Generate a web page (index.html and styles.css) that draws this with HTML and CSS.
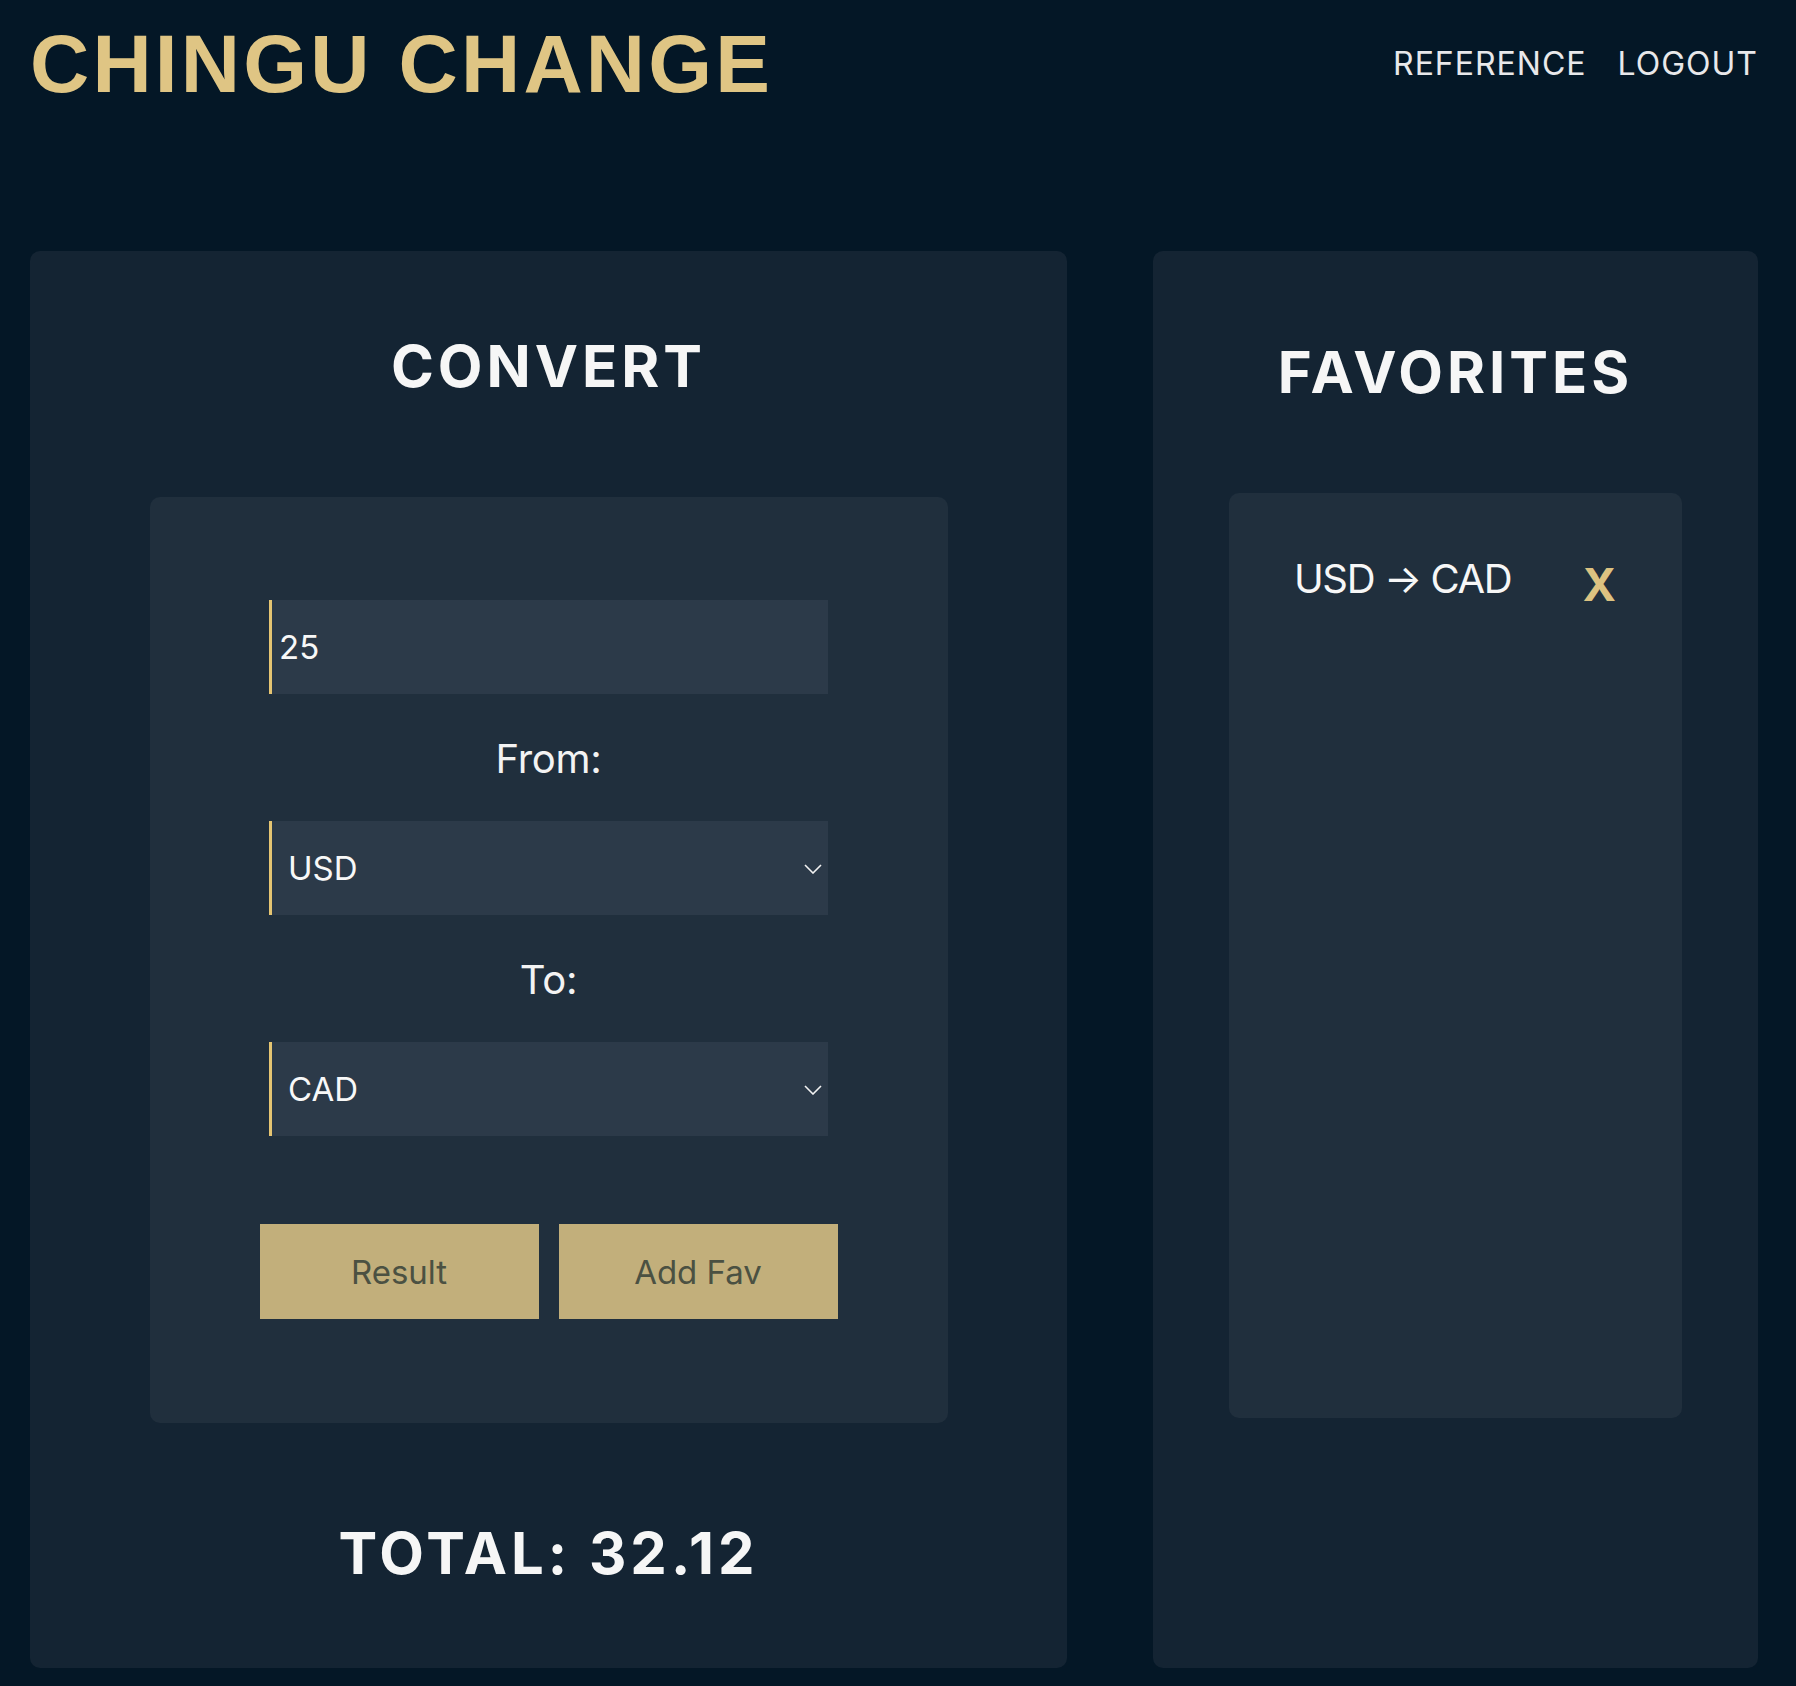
FILE: index.html
```html
<!DOCTYPE html>
<html lang="en">
<head>
<meta charset="utf-8">
<title>Chingu Change</title>
<link rel="stylesheet" href="styles.css">
</head>
<body>
<header class="topbar">
  <h1 class="brand">CHINGU CHANGE</h1>
  <nav class="nav">
    <a class="nav-link" href="#">REFERENCE</a>
    <a class="nav-link" href="#">LOGOUT</a>
  </nav>
</header>
<main class="layout">
  <section class="card card-convert">
    <h2 class="card-title">CONVERT</h2>
    <div class="panel panel-convert">
      <input class="field field-input" type="text" value="25">
      <label class="field-label">From:</label>
      <div class="select-wrap">
        <select class="field field-select">
          <option>USD</option>
        </select>
        <svg class="chevron" width="18" height="10" viewBox="0 0 18 10"><path d="M1 1 L9 9 L17 1" fill="none" stroke="#f2f2f2" stroke-width="1.6"/></svg>
      </div>
      <label class="field-label">To:</label>
      <div class="select-wrap">
        <select class="field field-select">
          <option>CAD</option>
        </select>
        <svg class="chevron" width="18" height="10" viewBox="0 0 18 10"><path d="M1 1 L9 9 L17 1" fill="none" stroke="#f2f2f2" stroke-width="1.6"/></svg>
      </div>
      <div class="actions">
        <button class="btn" type="button">Result</button>
        <button class="btn" type="button">Add Fav</button>
      </div>
    </div>
    <h2 class="card-title total">TOTAL: 32.12</h2>
  </section>
  <section class="card card-favs">
    <h2 class="card-title fav-title">FAVORITES</h2>
    <div class="panel panel-favs">
      <div class="fav-item">
        <span class="fav-pair">USD → CAD</span>
        <span class="fav-remove">X</span>
      </div>
    </div>
  </section>
</main>
</body>
</html>
```
FILE: styles.css
```css
* { box-sizing: border-box; }

html, body {
  margin: 0;
  padding: 0;
  background: #041726;
  color: #f5f5f5;
  font-family: Inter, "Noto Sans", sans-serif;
}

.topbar {
  display: flex;
  justify-content: space-between;
  align-items: center;
  padding: 17px 38px 0 30px;
}

.brand {
  margin: 0;
  font-family: "Liberation Sans", Arial, sans-serif;
  font-weight: 700;
  font-size: 82px;
  line-height: 94px;
  letter-spacing: 3.2px;
  color: #dfc584;
}

.nav {
  display: flex;
  gap: 31px;
  margin-top: -2px;
}

.nav-link {
  color: #e8e8ea;
  text-decoration: none;
  font-size: 32px;
  letter-spacing: 1px;
}

.layout {
  display: flex;
  justify-content: space-between;
  align-items: stretch;
  padding: 0 38px 0 30px;
  margin-top: 140px;
}

.card {
  background: #142433;
  border-radius: 10px;
  display: flex;
  flex-direction: column;
  align-items: center;
}

.card-convert {
  width: 1037px;
  padding: 80px 0 80px;
}

.card-favs {
  width: 605px;
  padding-top: 86px;
}

.card-title {
  margin: 0;
  font-size: 58px;
  line-height: 70px;
  font-weight: 700;
  letter-spacing: 4px;
  color: #f6f6f6;
}

.panel {
  background: #202f3d;
  border-radius: 10px;
}

.panel-convert {
  width: 798px;
  margin-top: 96px;
  padding: 103px 0 104px;
  display: flex;
  flex-direction: column;
  align-items: center;
}

.field {
  display: block;
  width: 559px;
  height: 94px;
  border: none;
  border-left: 3px solid #e5c572;
  background: #2c3a49;
  color: #f8f8f8;
  font-family: Inter, "Noto Sans", sans-serif;
  font-size: 33px;
  outline: none;
  border-radius: 0;
}

.field-input {
  padding: 0 0 0 7px;
}

.field-select {
  -webkit-appearance: none;
  appearance: none;
  padding: 0 0 0 16px;
}

.select-wrap {
  position: relative;
}

.chevron {
  position: absolute;
  right: 6px;
  top: 43px;
  pointer-events: none;
}

.field-label {
  display: block;
  margin: 41px 0 38px;
  font-size: 40px;
  line-height: 48px;
  color: #f3f3f3;
  letter-spacing: -0.3px;
}

.actions {
  display: flex;
  gap: 20px;
  margin-top: 88px;
}

.btn {
  width: 279px;
  height: 95px;
  border: none;
  background: #c2af7b;
  color: #4b5142;
  font-family: Inter, "Noto Sans", sans-serif;
  font-size: 33px;
  border-radius: 0;
}

.total {
  margin-top: 95px;
}

.panel-favs {
  width: 453px;
  height: 925px;
  margin-top: 86px;
  padding: 62px 66px 0 65px;
}

.fav-item {
  display: flex;
  justify-content: space-between;
  align-items: flex-start;
}

.fav-pair {
  font-size: 40px;
  line-height: 48px;
  color: #f7f7f7;
  letter-spacing: -1.4px;
}

.fav-remove {
  font-size: 45px;
  line-height: 54px;
  font-weight: 700;
  color: #dcc281;
  margin-top: 3px;
}
```
